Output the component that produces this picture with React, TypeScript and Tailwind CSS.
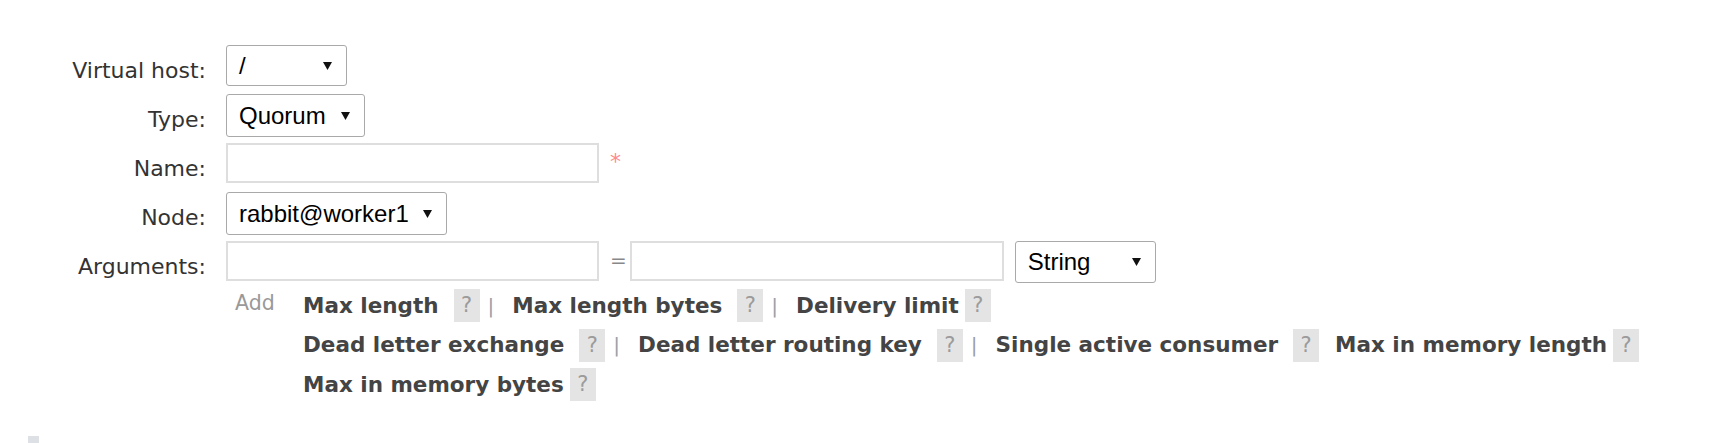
import React from "react";

const labelFont = "font-['DejaVu_Sans',sans-serif]";
const ctrlFont = "font-['Liberation_Sans',Arial,sans-serif]";

function Arrow() {
  return (
    <svg width="9" height="8" viewBox="0 0 9 8" className="shrink-0">
      <polygon points="0,0 9,0 4.5,8" fill="#111" />
    </svg>
  );
}

function Select({ text, w, h = "h-[42px]" }: { text: string; w: string; h?: string }) {
  return (
    <div
      className={`${w} ${h} ${ctrlFont} flex items-center justify-between pl-[12px] pr-[14px] border border-[#a9a9a9] rounded-[3px] bg-white text-[24px] text-black leading-none`}
    >
      <span>{text}</span>
      <Arrow />
    </div>
  );
}

function Input({ w }: { w: string }) {
  return <div className={`${w} h-[40px] border-2 border-[#dedede] bg-white`} />;
}

function Row({ label, children }: { label: string; children: React.ReactNode }) {
  return (
    <div className="flex h-[49px]">
      <div className={`w-[206px] text-right pt-[13px] leading-[26px] text-[22px] text-[#333] ${labelFont}`}>
        {label}
      </div>
      <div className="ml-[20px] flex items-start">{children}</div>
    </div>
  );
}

function Help({ gap }: { gap: string }) {
  return (
    <span
      className={`${gap} w-[26px] h-[33px] bg-[#e4e4e4] text-[#9b9b9b] text-[21px] flex items-center justify-center ${labelFont}`}
    >
      ?
    </span>
  );
}

function Sep() {
  return <span className={`ml-[8px] mr-[18px] text-[#9aa0a8] text-[20px] ${labelFont}`}>|</span>;
}

function Link({ text }: { text: string }) {
  return <span className={`font-bold text-[#444] text-[21.5px] ${labelFont} whitespace-nowrap`}>{text}</span>;
}

export default function App() {
  return (
    <div className="w-[1721px] h-[443px] bg-white relative overflow-hidden">
      <div className="pt-[45px] flex flex-col">
        <Row label="Virtual host:">
          <Select text="/" w="w-[121px]" h="h-[41px]" />
        </Row>
        <Row label="Type:">
          <Select text="Quorum" w="w-[139px]" h="h-[43px]" />
        </Row>
        <Row label="Name:">
          <Input w="w-[373px]" />
          <span className={`ml-[11px] mt-[2px] text-[#ff8a8a] text-[22px] ${labelFont}`}>*</span>
        </Row>
        <Row label="Node:">
          <Select text="rabbit@worker1" w="w-[221px]" h="h-[43px]" />
        </Row>
        <Row label="Arguments:">
          <Input w="w-[373px]" />
          <span className={`ml-[11px] mr-[3px] mt-[4px] text-[#888] text-[20px] ${labelFont}`}>=</span>
          <Input w="w-[374px]" />
          <div className="ml-[11px]">
            <Select text="String" w="w-[141px]" h="h-[42px]" />
          </div>
        </Row>
      </div>
      <div className="flex -mt-[4px]">
        <div className="w-[235px]" />
        <div className={`w-[68px] h-[39.5px] flex items-center pb-[4px] text-[20.5px] text-[#999] ${labelFont}`}>Add</div>
        <div className="flex flex-col">
          <div className="flex items-center h-[39.5px]">
            <Link text="Max length" />
            <Help gap="ml-[15px]" />
            <Sep />
            <Link text="Max length bytes" />
            <Help gap="ml-[15px]" />
            <Sep />
            <Link text="Delivery limit" />
            <Help gap="ml-[6px]" />
          </div>
          <div className="flex items-center h-[39.5px]">
            <Link text="Dead letter exchange" />
            <Help gap="ml-[15px]" />
            <Sep />
            <Link text="Dead letter routing key" />
            <Help gap="ml-[15px]" />
            <Sep />
            <Link text="Single active consumer" />
            <Help gap="ml-[15px]" />
            <span className="w-[16px]" />
            <Link text="Max in memory length" />
            <Help gap="ml-[6px]" />
          </div>
          <div className="flex items-center h-[39.5px]">
            <Link text="Max in memory bytes" />
            <Help gap="ml-[6px]" />
          </div>
        </div>
      </div>
      <div className="absolute left-[28px] top-[436px] w-[11px] h-[7px] bg-[#dde1e5]" />
    </div>
  );
}
